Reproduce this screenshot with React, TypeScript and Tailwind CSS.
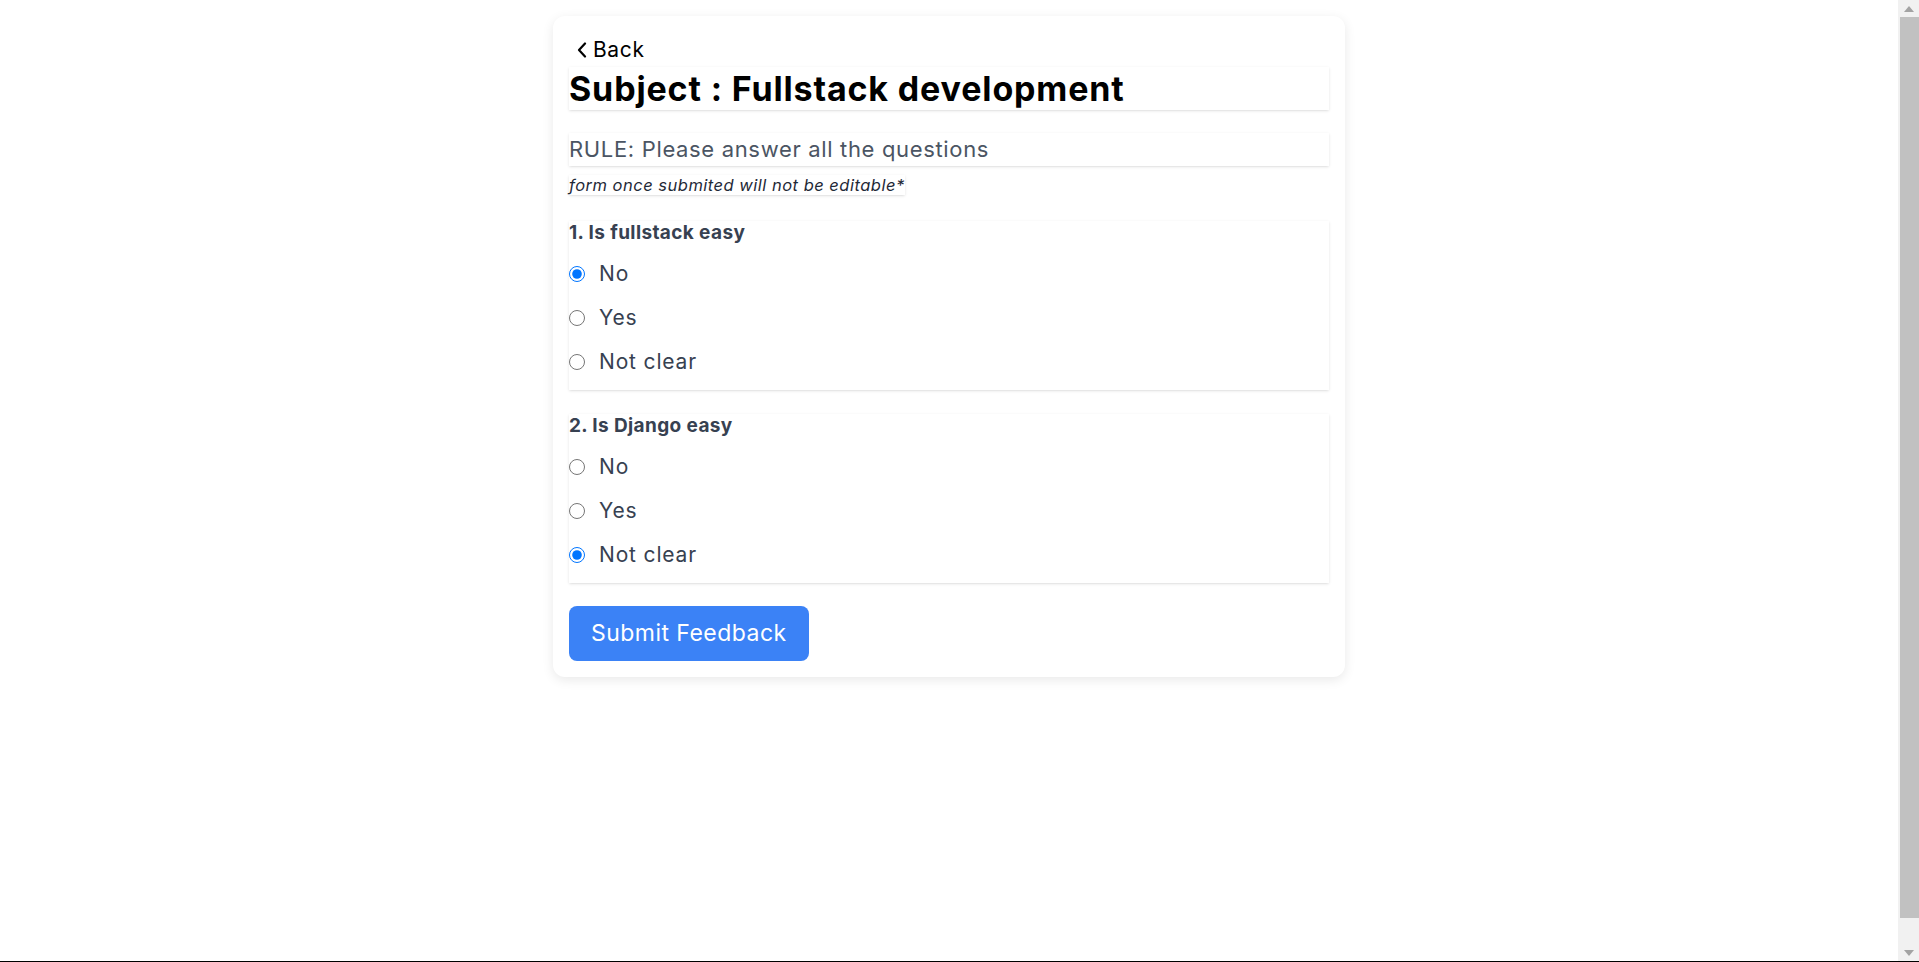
import React, { useState } from "react";

type Question = {
  id: number;
  title: string;
  options: string[];
};

const questions: Question[] = [
  { id: 1, title: "1. Is fullstack easy", options: ["No", "Yes", "Not clear"] },
  { id: 2, title: "2. Is Django easy", options: ["No", "Yes", "Not clear"] },
];

function BackIcon() {
  return (
    <svg width="10" height="16" viewBox="0 0 10 16" fill="none" className="mr-[6px]">
      <polyline
        points="8,1.5 2,8 8,14.5"
        stroke="currentColor"
        strokeWidth="2.2"
        strokeLinecap="round"
        strokeLinejoin="round"
      />
    </svg>
  );
}

function ScrollArrow({ up }: { up?: boolean }) {
  return (
    <div className="h-[17px] flex items-center justify-center">
      <svg width="10" height="6" viewBox="0 0 10 6">
        <polygon points={up ? "0,6 5,0 10,6" : "0,0 10,0 5,6"} fill="#a3a3a3" />
      </svg>
    </div>
  );
}

function Scrollbar() {
  return (
    <div className="w-[21px] shrink-0 bg-[#f1f1f1] flex flex-col">
      <ScrollArrow up />
      <div className="h-[901px] ml-[2px] bg-[#c1c1c1]" />
      <div className="flex-1" />
      <ScrollArrow />
    </div>
  );
}

function QuestionCard({
  question,
  value,
  onChange,
}: {
  question: Question;
  value: string;
  onChange: (v: string) => void;
}) {
  return (
    <div className="mt-6 shadow-sm bg-white pb-1.5">
      <h3 className="text-[19px] leading-6 font-bold tracking-[0.02em] text-[#374151]">
        {question.title}
      </h3>
      <div className="mt-[7px]">
        {question.options.map((opt) => (
          <label key={opt} className="flex items-center h-11 cursor-pointer">
            <input
              type="radio"
              name={"q" + question.id}
              checked={value === opt}
              onChange={() => onChange(opt)}
              className="w-4 h-4"
            />
            <span className="ml-[14px] text-[21px] tracking-[0.04em] text-[#374151]">{opt}</span>
          </label>
        ))}
      </div>
    </div>
  );
}

export default function App() {
  const [answers, setAnswers] = useState<Record<number, string>>({
    1: "No",
    2: "Not clear",
  });

  return (
    <div className="flex h-screen overflow-hidden border-b border-black bg-white font-['Inter',sans-serif]">
      <main className="flex-1 pt-4">
        <div className="w-[792px] mx-auto bg-white rounded-xl shadow-[0_3px_12px_rgba(0,0,0,0.09)] px-4 pt-5 pb-4">
          <button className="flex items-center h-7 ml-2 text-[21px] tracking-[0.03em] text-black">
            <BackIcon />
            Back
          </button>
          <div className="mt-[3px] h-[43px] flex items-center shadow-sm">
            <h1 className="text-[34px] font-bold tracking-[0.025em] text-black">
              Subject : Fullstack development
            </h1>
          </div>
          <div className="mt-[23px] h-[33px] flex items-center shadow-sm">
            <p className="text-[22px] tracking-[0.03em] text-[#4b5563]">
              RULE: Please answer all the questions
            </p>
          </div>
          <div className="mt-[7px]">
            <p className="inline-block text-[16.5px] leading-5 italic tracking-[0.03em] text-[#1f2937] shadow-sm">
              form once submited will not be editable*
            </p>
          </div>
          {questions.map((q) => (
            <QuestionCard
              key={q.id}
              question={q}
              value={answers[q.id]}
              onChange={(v) => setAnswers({ ...answers, [q.id]: v })}
            />
          ))}
          <button className="mt-[23px] h-[55px] px-[22px] rounded-lg bg-[#3b82f6] text-white text-[23px] tracking-[0.02em]">
            Submit Feedback
          </button>
        </div>
      </main>
      <Scrollbar />
    </div>
  );
}
